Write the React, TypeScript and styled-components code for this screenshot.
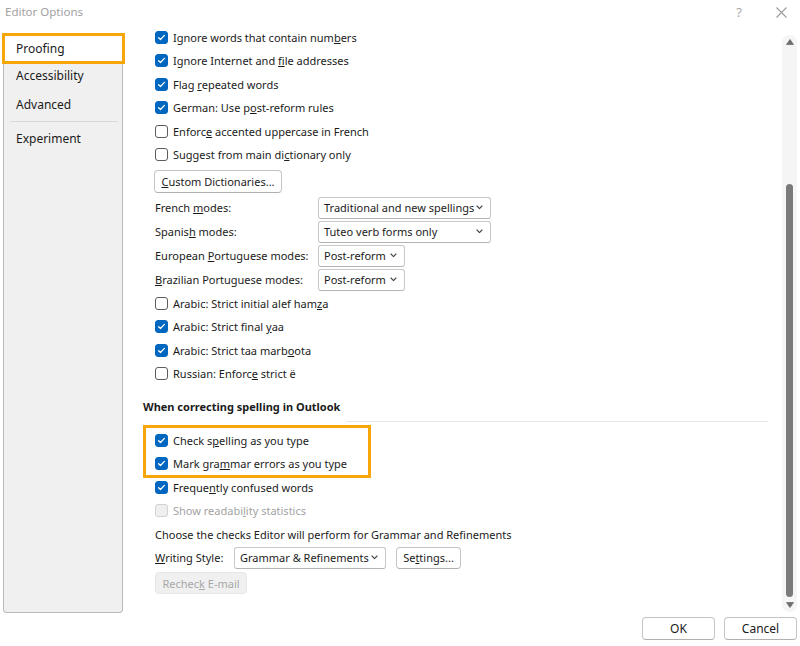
import React from "react";
import styled, { createGlobalStyle, css } from "styled-components";

const GlobalStyle = createGlobalStyle`
  html, body {
    margin: 0;
    padding: 0;
    background: #ffffff;
  }
  body {
    font-family: "Noto Sans", "Open Sans", sans-serif;
  }
`;

const ACCENT = "#0067c0";
const MARK = "#f6a609";

const Window = styled.div`
  width: 800px;
  height: 646px;
  display: flex;
  flex-direction: column;
  overflow: hidden;
  font-size: 11px;
  color: #1b1b1b;
  background: #ffffff;
`;

const TitleBar = styled.div`
  height: 31px;
  display: flex;
  align-items: flex-start;
  justify-content: space-between;
  padding-top: 4px;
  box-sizing: border-box;
`;

const Title = styled.div`
  padding-left: 5px;
  font-size: 11.5px;
  line-height: 16px;
  color: #a2a2a2;
`;

const TitleActions = styled.div`
  display: flex;
  align-items: center;
  gap: 34px;
  padding-right: 13px;
  height: 16px;
  color: #a8a8a8;
`;

const HelpMark = styled.span`
  font-size: 13px;
  line-height: 16px;
`;

const Body = styled.div`
  height: 583px;
  display: flex;
`;

const Sidebar = styled.nav`
  width: 120px;
  margin: 2px 0 1px 3px;
  padding-top: 1px;
  box-sizing: border-box;
  background: #f0f0f0;
  border: 1px solid #b9b9b9;
  border-top: none;
  border-radius: 0 0 4px 4px;
  display: flex;
  flex-direction: column;
`;

const NavItem = styled.div<{ $height: number; $selected?: boolean }>`
  height: ${(p) => p.$height}px;
  flex: none;
  display: flex;
  align-items: center;
  padding-left: 12px;
  font-size: 12px;
  position: relative;
  ${(p) =>
    p.$selected &&
    css`
      background: #ffffff;
      &::after {
        content: "";
        position: absolute;
        top: -1px;
        bottom: -2px;
        left: -2px;
        right: -3px;
        border: 3px solid ${MARK};
      }
    `}
`;

const NavDivider = styled.div`
  height: 1px;
  background: #d9d9d9;
  margin: 0 4px 2px 6px;
`;

const Main = styled.div`
  flex: 1;
  display: flex;
  min-width: 0;
`;

const Viewport = styled.div`
  flex: 1;
  overflow: hidden;
  min-width: 0;
`;

const Content = styled.div`
  margin-top: -5.75px;
  padding: 0 14px 0 20px;
  display: flex;
  flex-direction: column;
  align-items: stretch;
`;

const Indent = styled.div`
  padding-left: 12px;
  display: flex;
  flex-direction: column;
  align-items: flex-start;
`;

const CheckRow = styled.div<{ $disabled?: boolean }>`
  height: 23.5px;
  display: flex;
  align-items: center;
  gap: 5px;
  line-height: 11px;
  white-space: nowrap;
  color: ${(p) => (p.$disabled ? "#a3a3a3" : "inherit")};
`;

const Box = styled.span<{ $checked?: boolean; $disabled?: boolean }>`
  width: 13px;
  height: 13px;
  box-sizing: border-box;
  border-radius: 3px;
  display: inline-flex;
  align-items: center;
  justify-content: center;
  flex: none;
  background: ${(p) => (p.$checked ? ACCENT : p.$disabled ? "#efefef" : "#ffffff")};
  border: 1px solid
    ${(p) => (p.$checked ? ACCENT : p.$disabled ? "#d2d2d2" : "#5c5c5c")};
`;

const Button = styled.div<{ $width: number; $disabled?: boolean }>`
  width: ${(p) => p.$width}px;
  height: 23px;
  box-sizing: border-box;
  display: flex;
  align-items: center;
  justify-content: center;
  border: 1px solid ${(p) => (p.$disabled ? "#e6e6e6" : "#c4c4c4")};
  border-bottom-color: ${(p) => (p.$disabled ? "#e6e6e6" : "#b0b0b0")};
  border-radius: 4px;
  background: ${(p) => (p.$disabled ? "#f0f0f0" : "#ffffff")};
  color: ${(p) => (p.$disabled ? "#a8a8a8" : "inherit")};
  white-space: nowrap;
`;

const CustomButton = styled(Button)`
  margin: 3.75px 0 0 -1px;
`;

const SelectGrid = styled.div`
  margin-top: 2.5px;
  display: grid;
  grid-template-columns: 163px auto;
  grid-auto-rows: 24px;
  align-items: center;
  justify-items: start;
  white-space: nowrap;
`;

const Select = styled.div<{ $width: number }>`
  width: ${(p) => p.$width}px;
  height: 22px;
  box-sizing: border-box;
  display: flex;
  align-items: center;
  justify-content: space-between;
  padding: 0 7px 0 5px;
  border: 1px solid #c8c8c8;
  border-bottom-color: #b4b4b4;
  border-radius: 3px;
  white-space: nowrap;
`;

const Heading = styled.div`
  margin-top: 13.5px;
  height: 24px;
  display: flex;
  gap: 7px;
`;

const HeadingText = styled.div`
  line-height: 16px;
  font-weight: 700;
  white-space: nowrap;
`;

const HeadingRule = styled.div`
  flex: 1;
  align-self: flex-end;
  height: 1px;
  margin-bottom: 1px;
  background: #e6e6e6;
`;

const Group = styled.div`
  margin-top: 5.25px;
`;

const Marked = styled.div`
  position: relative;
  &::after {
    content: "";
    position: absolute;
    top: -3.25px;
    bottom: -2.75px;
    left: -12px;
    width: 228px;
    border: 3px solid ${MARK};
    box-sizing: border-box;
    pointer-events: none;
  }
`;

const TextRow = styled.div`
  height: 23.5px;
  display: flex;
  align-items: center;
  white-space: nowrap;
`;

const StyleLabel = styled.span`
  width: 79px;
`;

const SettingsButton = styled(Button)`
  margin-left: 10px;
  height: 22px;
`;

const RecheckButton = styled(Button)`
  margin-top: 2.75px;
  height: 22px;
`;

const ScrollTrack = styled.div`
  width: 15px;
  margin: 4px 3px 2px 0;
  padding: 4px 0;
  box-sizing: border-box;
  background: #f5f5f5;
  border-radius: 7px;
  display: flex;
  flex-direction: column;
  align-items: center;
`;

const Thumb = styled.div`
  margin-top: auto;
  margin-bottom: 5px;
  width: 7px;
  height: 413px;
  border-radius: 4px;
  background: #7a7a7a;
`;

const Footer = styled.div`
  flex: 1;
  display: flex;
  justify-content: flex-end;
  align-items: flex-start;
  gap: 9px;
  padding: 3px 3px 0 0;
  font-size: 12px;
`;

const Check = ({ checked, disabled }: { checked?: boolean; disabled?: boolean }) => (
  <Box $checked={checked} $disabled={disabled}>
    {checked && (
      <svg width="9" height="9" viewBox="0 0 9 9">
        <polyline
          points="1.6,4.7 3.5,6.5 7.4,2.4"
          fill="none"
          stroke="#ffffff"
          strokeWidth="1.3"
          strokeLinecap="round"
          strokeLinejoin="round"
        />
      </svg>
    )}
  </Box>
);

const Chevron = () => (
  <svg width="7" height="5" viewBox="0 0 7 5">
    <polyline
      points="1,1 3.5,3.6 6,1"
      fill="none"
      stroke="#444"
      strokeWidth="1.1"
      strokeLinecap="round"
      strokeLinejoin="round"
    />
  </svg>
);

const Option = ({
  checked,
  disabled,
  children,
}: {
  checked?: boolean;
  disabled?: boolean;
  children: React.ReactNode;
}) => (
  <CheckRow $disabled={disabled}>
    <Check checked={checked} disabled={disabled} />
    <span>{children}</span>
  </CheckRow>
);

export default function App() {
  return (
    <>
      <GlobalStyle />
      <Window>
        <TitleBar>
          <Title>Editor Options</Title>
          <TitleActions>
            <HelpMark>?</HelpMark>
            <svg width="11" height="11" viewBox="0 0 11 11">
              <path d="M0.5 0.5 L10.5 10.5 M10.5 0.5 L0.5 10.5" stroke="#9a9a9a" strokeWidth="1.1" />
            </svg>
          </TitleActions>
        </TitleBar>

        <Body>
          <Sidebar>
            <NavItem $height={28} $selected>
              Proofing
            </NavItem>
            <NavItem $height={26}>Accessibility</NavItem>
            <NavItem $height={33}>Advanced</NavItem>
            <NavDivider />
            <NavItem $height={28}>Experiment</NavItem>
          </Sidebar>

          <Main>
            <Viewport>
              <Content>
                <Indent>
                  <Option checked>
                    Ignore words that contain num<u>b</u>ers
                  </Option>
                  <Option checked>
                    Ignore Internet and <u>f</u>ile addresses
                  </Option>
                  <Option checked>
                    Flag <u>r</u>epeated words
                  </Option>
                  <Option checked>
                    German: Use p<u>o</u>st-reform rules
                  </Option>
                  <Option>
                    Enforc<u>e</u> accented uppercase in French
                  </Option>
                  <Option>
                    Suggest from main di<u>c</u>tionary only
                  </Option>
                  <CustomButton $width={128}>
                    <span>
                      <u>C</u>ustom Dictionaries...
                    </span>
                  </CustomButton>
                  <SelectGrid>
                    <span>
                      French <u>m</u>odes:
                    </span>
                    <Select $width={173}>
                      Traditional and new spellings
                      <Chevron />
                    </Select>
                    <span>
                      Spanis<u>h</u> modes:
                    </span>
                    <Select $width={173}>
                      Tuteo verb forms only
                      <Chevron />
                    </Select>
                    <span>
                      European <u>P</u>ortuguese modes:
                    </span>
                    <Select $width={87}>
                      Post-reform
                      <Chevron />
                    </Select>
                    <span>
                      <u>B</u>razilian Portuguese modes:
                    </span>
                    <Select $width={87}>
                      Post-reform
                      <Chevron />
                    </Select>
                  </SelectGrid>
                  <Option>
                    Arabic: Strict initial alef ham<u>z</u>a
                  </Option>
                  <Option checked>
                    Arabic: Strict final <u>y</u>aa
                  </Option>
                  <Option checked>
                    Arabic: Strict taa marb<u>o</u>ota
                  </Option>
                  <Option>
                    Russian: Enforc<u>e</u> strict ë
                  </Option>
                </Indent>

                <Heading>
                  <HeadingText>When correcting spelling in Outlook</HeadingText>
                  <HeadingRule />
                </Heading>

                <Group>
                  <Indent>
                    <Marked>
                      <Option checked>
                        Check s<u>p</u>elling as you type
                      </Option>
                      <Option checked>
                        Mark gra<u>m</u>mar errors as you type
                      </Option>
                    </Marked>
                    <Option checked>
                      Freque<u>n</u>tly confused words
                    </Option>
                    <Option disabled>
                      Show readabi<u>l</u>ity statistics
                    </Option>
                    <TextRow>Choose the checks Editor will perform for Grammar and Refinements</TextRow>
                    <TextRow>
                      <StyleLabel>
                        <u>W</u>riting Style:
                      </StyleLabel>
                      <Select $width={152}>
                        Grammar &amp; Refinements
                        <Chevron />
                      </Select>
                      <SettingsButton $width={65}>
                        <span>
                          Se<u>t</u>tings...
                        </span>
                      </SettingsButton>
                    </TextRow>
                    <RecheckButton $width={92} $disabled>
                      <span>
                        Rechec<u>k</u> E-mail
                      </span>
                    </RecheckButton>
                  </Indent>
                </Group>
              </Content>
            </Viewport>

            <ScrollTrack>
              <svg width="8" height="6" viewBox="0 0 8 6">
                <path d="M4 0.5 L7.5 5.5 L0.5 5.5 Z" fill="#6e6e6e" strokeLinejoin="round" stroke="#6e6e6e" strokeWidth="0.8" />
              </svg>
              <Thumb />
              <svg width="8" height="6" viewBox="0 0 8 6">
                <path d="M0.5 0.5 L7.5 0.5 L4 5.5 Z" fill="#6e6e6e" strokeLinejoin="round" stroke="#6e6e6e" strokeWidth="0.8" />
              </svg>
            </ScrollTrack>
          </Main>
        </Body>

        <Footer>
          <Button $width={73}>OK</Button>
          <Button $width={73}>Cancel</Button>
        </Footer>
      </Window>
    </>
  );
}
